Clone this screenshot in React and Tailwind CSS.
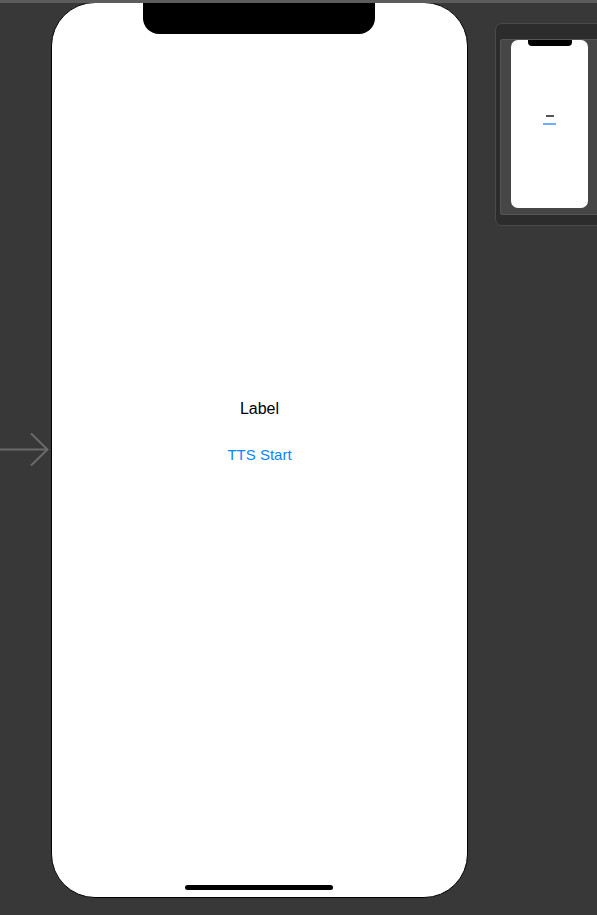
import React from 'react';

const EntryArrow = () => (
  <svg className="absolute left-0 top-[432px]" width="50" height="36" viewBox="0 0 50 36">
    <path d="M0 17.5 H47.5 M31 1.5 L47.5 17.5 L31 33.5" fill="none" stroke="#6a6a6a" strokeWidth="2" />
  </svg>
);

const Phone = () => (
  <div className="absolute left-[51px] top-[2px] w-[417px] h-[896px] bg-white border border-black rounded-[44px] flex flex-col items-center overflow-hidden">
    <div className="w-[232px] h-[32px] bg-black rounded-b-[16px] shrink-0 -mt-px -ml-[2px]" />
    <div className="flex-1 flex flex-col items-center justify-center gap-[27px] pb-[56px] font-['Liberation_Sans',Arial,sans-serif]">
      <div className="text-[16px] text-black leading-[20px]">Label</div>
      <button className="text-[15px] text-[#0a84ff] leading-[18px]">TTS Start</button>
    </div>
    <div className="w-[148px] h-[5px] bg-black rounded-full mb-[7px] shrink-0 -ml-[2px]" />
  </div>
);

const Thumbnail = () => (
  <div className="absolute left-[495px] top-[23px] w-[120px] h-[203px] bg-[#2c2c2c] border border-[#4a4a4a] rounded-[7px] pt-[15px] pl-[4px]">
    <div className="w-[120px] h-[176px] bg-[#464646] border-t border-l border-b border-[#565656] rounded-l-[3px] pl-[10px]">
      <div className="w-[77px] h-[168px] bg-white rounded-[7px] flex flex-col items-center">
        <div className="w-[44px] h-[6px] bg-black rounded-b-[4px]" />
        <div className="flex-1 flex flex-col items-center justify-center gap-[6px] pb-[14px]">
          <div className="w-[8px] h-[2px] bg-[#555]" />
          <div className="w-[13px] h-[2px] bg-[#6aaeff]" />
        </div>
      </div>
    </div>
  </div>
);

export default function App() {
  return (
    <div className="relative w-[597px] h-[915px] bg-[#383838] overflow-hidden">
      <div className="absolute left-0 top-0 w-full h-[3px] bg-[#5c5c5c] z-10" />
      <EntryArrow />
      <Phone />
      <Thumbnail />
    </div>
  );
}
